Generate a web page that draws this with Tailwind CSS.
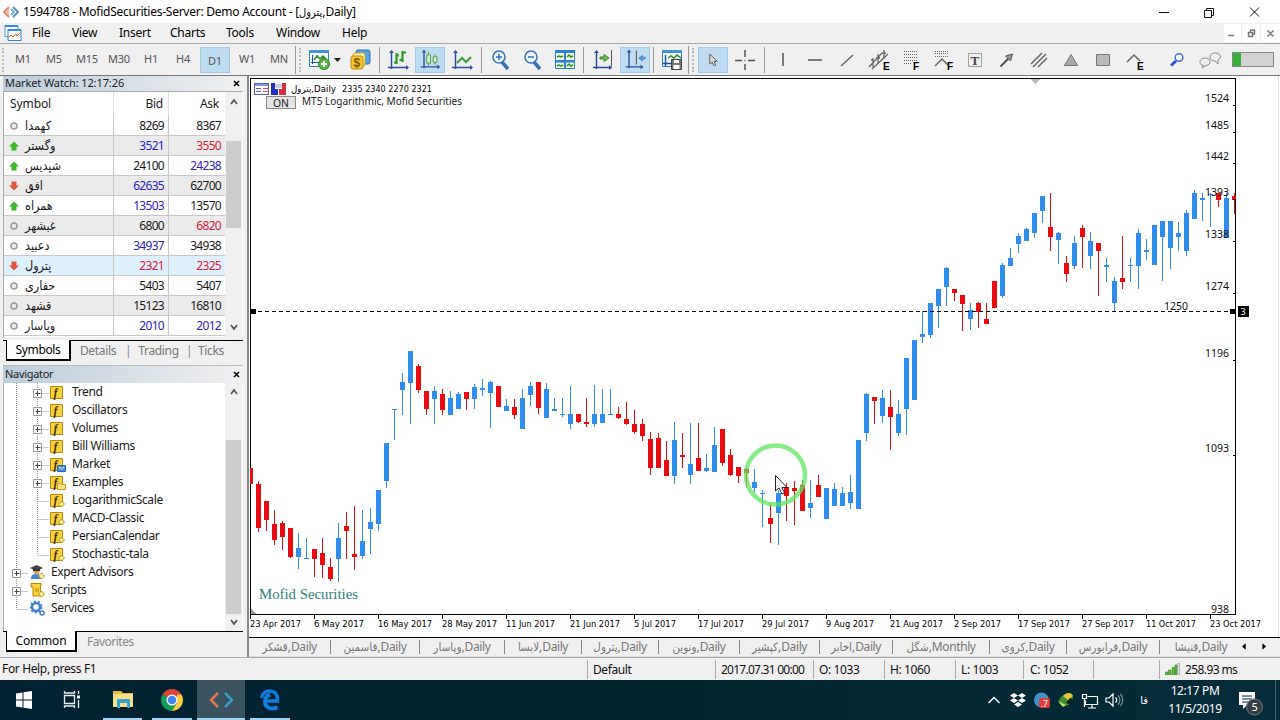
<!DOCTYPE html>
<html lang="en">
<head>
  <meta charset="UTF-8">
  <meta name="viewport" content="width=device-width, initial-scale=1.0">
  <title>MofidSecurities-Server: Demo Account</title>
  <script src="https://cdn.jsdelivr.net/npm/@tailwindcss/browser@4"></script>
</head>
<body class="w-[1280px] h-[720px] overflow-hidden bg-[#f0f0f0] font-['Noto_Sans','DejaVu_Sans_Condensed',sans-serif] text-xs text-[#1a1a1a] tracking-[-0.25px] whitespace-nowrap flex flex-col">

  <!-- Title bar -->
  <header class="h-[23px] shrink-0 bg-white flex items-center pl-[3px]">
    <svg class="w-4 h-4" viewBox="0 0 16 16" fill="none" stroke-width="1.8"><path d="M6 3 1 8l5 5" stroke="#e08060"/><path d="m10 3 5 5-5 5" stroke="#4f8fb0"/><path d="M6 6 4 8l2 2" stroke="#f0b090"/><path d="m8 5 3 3-3 3" stroke="#6ab0d0"/></svg>
    <div class="ml-1 w-[340px] text-black">1594788 - MofidSecurities-Server: Demo Account - [<span class="text-[11px] tracking-normal">پترول</span>,Daily]</div>
    <div class="ml-auto flex items-center">
      <svg class="w-[126px] h-5" viewBox="1154 0 126 20" fill="none" stroke="#111"><path d="M1159 10.500h10M1204.500 8.500h7v7h-7zM1206.500 8.500v-2h7v7h-2M1250 5.500l9 9M1259 5.500l-9 9"/></svg>
    </div>
  </header>

  <!-- Menu -->
  <nav class="h-5 shrink-0 flex items-center pl-1 text-black">
    <svg class="w-[18px] h-[18px]" viewBox="0 0 18 18" fill="#fff"><path d="M1 1.500h13v11H1z" stroke="#4a9be0"/><path d="M1 1h13v2H1z" fill="#2f8de0"/><path d="M4 5.500h13v11H4z" stroke="#2f80d0"/><path d="M4 5h13v2H4z" fill="#2f8de0"/><path d="m5 13 2-2 2 2 3-3 1 2 3-3" fill="none" stroke="#e05a30"/></svg>
    <div class="w-[40px] ml-[10px]">File</div>
    <div class="w-[47px]">View</div>
    <div class="w-[51px]">Insert</div>
    <div class="w-[56px]">Charts</div>
    <div class="w-[50px]">Tools</div>
    <div class="w-[66px]">Window</div>
    <div>Help</div>
    <svg class="ml-auto w-14 h-[18px] bg-white" viewBox="1224 24 56 18" fill="none" stroke="#777" stroke-width="1.500"><path d="M1228 35.500h6M1248.500 32.500h4v4h-4zM1250.500 32v-2h4v4h-2M1267.500 30.500l6 6M1273.500 30.500l-6 6"/><path d="M1241.500 24v18M1260.500 24v18" stroke="#eee" stroke-width="1"/></svg>
  </nav>

  <!-- Toolbar -->
  <section class="h-[33px] shrink-0 flex items-center pl-[7px] border-t border-b border-t-[#a5a5a5] border-b-[#777] text-[11px] text-[#555] relative">
    <div class="absolute left-[2px] top-1 h-6 border-l-2 border-dotted border-[#bbb]"></div>
    <div class="w-8 text-center">M1</div><div class="w-8 text-center pr-[2px]">M5</div><div class="w-8 text-center">M15</div><div class="w-8 text-center">M30</div><div class="w-8 text-center">H1</div><div class="w-8 text-center">H4</div>
    <div class="w-8 px-px"><div class="h-[26px] leading-6 pt-px text-center bg-[#bfdcf2] border border-[#a0cbea]">D1</div></div>
    <div class="w-8 text-center">W1</div><div class="w-8 text-center">MN</div>
    <div class="w-2 h-7 flex items-center justify-between border-l border-[#999]"><div class="ml-[3px] h-6 border-l-2 border-dotted border-[#bbb]"></div></div>

    <svg class="w-10 h-6" viewBox="0 0 40 24" fill="none"><path d="M6.500 2.500h19v16h-19z" fill="#f4faff" stroke="#2d7fc4"/><path d="M6 2h20v3H6z" fill="#3f94d8"/><path d="M9.500 7v9M8 14.500h15" stroke="#1f4f9c"/><path d="m11 12 3-4 3 3 3-3 3 3" stroke="#2d9020" stroke-width="1.500"/><circle cx="21" cy="16" r="5.500" fill="#58b947" stroke="#2a8a20"/><path d="M18 16h6M21 13v6" stroke="#fff" stroke-width="2"/><path d="m31 10 3.500 4 3.500-4z" fill="#222"/></svg>
    <svg class="w-8 h-6 ml-px mr-[3px]" viewBox="0 0 32 24"><rect x="12" y="2" width="14" height="14" rx="2" fill="#58a3e4" stroke="#2d70b8"/><rect x="9" y="5" width="12" height="13" rx="2" fill="#fff2a8" stroke="#d8a520"/><rect x="7" y="8" width="12" height="13" rx="2" fill="#f7c52b" stroke="#c48c10"/><text x="9.500" y="19" font-size="12" font-weight="700" fill="#7a5400" font-family="Liberation Sans">$</text></svg>
    <div class="h-[26px] border-l border-[#999] mr-[2px]"></div>
    <svg class="w-8 h-6" viewBox="0 0 32 24" fill="none"><path d="M9.500 3v18M6 19.500h19" stroke="#2b4fa0" stroke-width="1.500"/><path d="m7 5 2.500-3L12 5zM24 17l3 2.500-3 2.500z" fill="#2b4fa0"/><path d="M14.500 5v11M12 14.500h3M14 7.500h3M20.500 3v11M17.500 12h3M20 4.500h4" stroke="#2c9a24" stroke-width="2.200"/></svg>
    <div class="w-8 px-px"><svg class="w-[30px] h-[26px] bg-[#bfdcf2] border border-[#a0cbea]" viewBox="1 0 30 26" fill="none"><path d="M9.500 3v19M6 20.500h19" stroke="#2b4fa0" stroke-width="1.500"/><path d="m7 5 2.500-3L12 5zM24 18l3 2.500-3 2.500z" fill="#2b4fa0"/><path d="M12.500 7.500h4v9h-4zM14.500 4v3M14.500 17v2M19.500 9.500h4v6h-4zM21.500 7v2M21.500 16v2" stroke="#3f9a3a" fill="#dff5d0"/></svg></div>
    <svg class="w-8 h-6 mr-[3px]" viewBox="0 0 32 24" fill="none"><path d="M9.500 3v18M6 19.500h19" stroke="#2b4fa0" stroke-width="1.500"/><path d="m7 5 2.500-3L12 5zM24 17l3 2.500-3 2.500z" fill="#2b4fa0"/><path d="m11 15 5-5 4 4 5-5" stroke="#3f9a3a" stroke-width="2"/></svg>
    <div class="h-[26px] border-l border-[#999] mr-[3px]"></div>
    <svg class="w-8 h-6" viewBox="0 0 32 24" fill="none"><path d="m17 14 6 7" stroke="#3b6fb8" stroke-width="3.500"/><circle cx="14" cy="9" r="6" fill="#eef7ff" stroke="#3673bb" stroke-width="1.500"/><path d="M11 9h6M14 6v6" stroke="#3673bb" stroke-width="1.500"/></svg>
    <svg class="w-8 h-6" viewBox="0 0 32 24" fill="none"><path d="m17 14 6 7" stroke="#3b6fb8" stroke-width="3.500"/><circle cx="14" cy="9" r="6" fill="#eef7ff" stroke="#3673bb" stroke-width="1.500"/><path d="M11 9h6" stroke="#3673bb" stroke-width="1.500"/></svg>
    <svg class="w-8 h-6 mr-[2px]" viewBox="0 0 32 24" fill="none"><path d="M6.500 2.500h19v18h-19z" fill="#e9f7e4" stroke="#2d7fc4"/><path d="M6 2h20v3H6zM6 12h20v2.500H6zM15 2h2v19h-2z" fill="#2f80d0"/><path d="m8 9 2-1 2 1 2-1M18 9l2-2 2 2 2-1M8 18l2-1 2 1 2-1M18 18l2-2 2 2 2-1" stroke="#2d9020" stroke-width="1.500"/></svg>
    <div class="h-[26px] border-l border-[#999] mr-[3px]"></div>
    <svg class="w-8 h-6" viewBox="0 0 32 24" fill="none"><path d="M9.500 3v18M6 19.500h19" stroke="#2b4fa0" stroke-width="1.500"/><path d="m7 5 2.500-3L12 5zM22 17l3 2.500-3 2.500z" fill="#2b4fa0"/><path d="M24.500 2v16" stroke="#555"/><path d="M13 9h4V6.500l5 3.500-5 3.500V11h-4z" fill="#6fc04f" stroke="#3a8a2a"/></svg>
    <div class="w-8 px-px"><svg class="w-[30px] h-[26px] bg-[#bfdcf2] border border-[#a0cbea]" viewBox="1 0 30 26" fill="none"><path d="M9.500 3v19M6 20.500h19" stroke="#2b4fa0" stroke-width="1.500"/><path d="m7 5 2.500-3L12 5zM22 18l3 2.500-3 2.500z" fill="#2b4fa0"/><path d="M17.500 3v15" stroke="#444"/><path d="m20 11 4-3v2h3v2h-3v2z" fill="#5b9be0" stroke="#3673bb" stroke-width=".7"/></svg></div>
    <div class="h-[26px] border-l border-[#999] ml-[2px] mr-[2px]"></div>
    <svg class="w-8 h-6" viewBox="0 0 32 24" fill="none"><path d="M6.500 2.500h19v16h-19z" fill="#f4faff" stroke="#2d7fc4"/><path d="M6 2h20v3H6z" fill="#3f94d8"/><path d="M9.500 7v11M7 15.500h8" stroke="#1f4f9c" stroke-width="1.500"/><path d="m12 10 3-2 3 2 3-3 4 3" stroke="#2d9020" stroke-width="1.500"/><path d="M15.500 11.500h10v10h-10z" fill="#777" stroke="#444"/><path d="M18 12h5v3h-5zM17.500 17h6v4h-6z" fill="#fff"/></svg>
    <div class="w-[9px] h-7 flex items-center border-l border-[#999]"><div class="ml-[3px] h-6 border-l-2 border-dotted border-[#bbb]"></div></div>

    <div class="w-8 px-px"><svg class="w-[30px] h-[26px] bg-[#bfdcf2] border border-[#a0cbea]" viewBox="1 0 30 26" fill="none"><path d="M12.500 6.500v11l2.500-2.200 2 4 2-1-2-3.800h3.500z" fill="#ddd" stroke="#555"/></svg></div>
    <svg class="w-8 h-6 mr-[3px]" viewBox="0 0 32 24" stroke="#555" stroke-width="1.500"><path d="M6 12.500h7M19 12.500h7M16 2v7M16 16v6M15.500 12.500h1"/></svg>
    <div class="h-[26px] border-l border-[#999] mr-[2px]"></div>
    <svg class="w-8 h-6" viewBox="0 0 32 24" stroke="#555" stroke-width="1.500"><path d="M16 5v13"/></svg>
    <svg class="w-8 h-6" viewBox="0 0 32 24" stroke="#555" stroke-width="1.500"><path d="M9 12h14"/></svg>
    <svg class="w-8 h-6" viewBox="0 0 32 24" stroke="#666" stroke-width="1.500"><path d="M10 18 22 7"/></svg>
    <svg class="w-8 h-6" viewBox="0 0 32 24" fill="none" stroke="#666" stroke-width="1.300"><path d="M6 19 19 5M9 21 25 6M10 10v9M8 12h2M15 6v10M13 10h4M21 2v9M19 5h4"/><text x="20" y="22" font-size="10" font-weight="700" fill="#000" stroke="none" font-family="Liberation Sans">E</text></svg>
    <svg class="w-8 h-6" viewBox="0 0 32 24" fill="none" stroke="#666" stroke-dasharray="1 1"><path d="M9 3.500h14M9 6.500h14M9 9.500h14M9 12.500h14M9 15.500h8"/><text x="18" y="22" font-size="10" font-weight="700" fill="#000" stroke="none" font-family="Liberation Sans">F</text></svg>
    <svg class="w-8 h-6" viewBox="0 0 32 24" fill="none" stroke="#666"><path d="M8 3.500h14M8 5.500h14M8 8.500h14" stroke-dasharray="1 1"/><path d="m8 18 7-7 6 6" stroke-width="1.500"/><text x="20" y="22" font-size="10" font-weight="700" fill="#000" stroke="none" font-family="Liberation Sans">F</text></svg>
    <svg class="w-8 h-6" viewBox="0 0 32 24" fill="none"><path d="M9.500 5.500h13v13h-13z" stroke="#555" stroke-dasharray="1 1"/><text x="11.500" y="17" font-size="13" font-weight="700" fill="#444" font-family="Liberation Serif">T</text></svg>
    <svg class="w-8 h-6" viewBox="0 0 32 24" fill="#999" stroke="#555"><path d="m9.500 18.500 8-8" stroke-width="2"/><path d="m14.500 8 7-2-2 7z"/></svg>
    <svg class="w-8 h-6" viewBox="0 0 32 24" stroke="#666" stroke-width="1.500"><path d="M8 16 19 5M10 19 23 6M15 19l9-9"/></svg>
    <svg class="w-8 h-6" viewBox="0 0 32 24" fill="#aaa" stroke="#777"><path d="M16 6.500 22.500 17.500h-13z"/></svg>
    <svg class="w-8 h-6" viewBox="0 0 32 24" fill="#bbb" stroke="#777"><path d="M9.500 6.500h13v11h-13z"/></svg>
    <svg class="w-8 h-6" viewBox="0 0 32 24" fill="none" stroke="#666" stroke-width="1.500"><path d="m8 14 7-7 6 6"/><text x="18" y="22" font-size="10" font-weight="700" fill="#000" stroke="none" font-family="Liberation Sans">E</text></svg>
    <svg class="w-8 h-6 ml-[10px]" viewBox="0 0 32 24" fill="none"><path d="m15 13-5 4.500" stroke="#2b4fd0" stroke-width="3"/><circle cx="18" cy="9.500" r="3.800" fill="#fff" stroke="#4a6fd8" stroke-width="1.500"/></svg>
    <svg class="w-8 h-6 ml-px" viewBox="0 0 32 24" fill="#eee" stroke="#888"><path d="M21 5c-4 0-5 2-5 4s2 4 5 4l3 3v-4c4-2 3-7-3-7zM11.500 10c-7 0-7 7-2 7.500L8 20l4-2.500c6-.5 5-7.500-.5-7.500z"/></svg>
    <div class="ml-[6px] w-[42px] h-[15px] border border-[#888] bg-[#d2d2d2]"><div class="w-2 h-full bg-[#38b038]"></div></div>
  </section>

  <main class="h-[581px] shrink-0 flex">
    <!-- Left docked panels -->
    <aside class="w-[247px] pl-[3px] pr-1 flex flex-col">
      <section class="h-[289px] shrink-0 flex flex-col">
        <div class="h-[15px] flex items-center justify-between pl-[2px] pr-[3px] bg-linear-to-r from-[#bccddd] to-[#f0f0f0] text-[11px] tracking-[-0.1px]">Market Watch: 12:17:26 <svg class="w-[7px] h-[7px]" viewBox="0 0 7 7" stroke="#000" stroke-width="1.600"><path d="m1 1 5 5M6 1 1 6"/></svg></div>
        <div class="flex h-[246px] border-l border-t border-[#aaa] bg-white">
          <div class="w-[221px]" id="quotes">
            <div class="h-6 flex items-center text-[#222]">
              <div class="w-[110px] h-6 leading-6 pl-[6px] border-r border-[#e0e0e0] tracking-[-0.1px]">Symbol</div>
              <div class="w-[55px] h-6 leading-6 text-right pr-[5px] border-r border-[#e0e0e0]">Bid</div>
              <div class="w-14 text-right pr-[6px]">Ask</div>
            </div>
          </div>
          <div class="w-[17px] bg-[#f0f0f0] flex flex-col items-center justify-between py-[6px] relative">
            <svg class="w-2 h-2" viewBox="0 0 8 8" fill="none" stroke="#555" stroke-width="1.700"><path d="m1 6 3-4 3 4"/></svg>
            <div class="absolute top-[49px] left-px w-[15px] h-[87px] bg-[#cdcdcd]"></div>
            <svg class="w-2 h-2" viewBox="0 0 8 8" fill="none" stroke="#555" stroke-width="1.700"><path d="m1 2 3 4 3-4"/></svg>
          </div>
        </div>
        <div class="mt-[3px] h-[21px] flex border-t border-black text-[#777] leading-[19px] tracking-[-0.35px]">
          <div class="ml-[3px] -mt-px w-[65px] h-[21px] border border-t-0 border-b-2 border-r-2 border-black bg-white text-black text-center">Symbols</div>
          <div class="w-[54px] text-center">Details</div><span class="w-[6px] text-[#888]">|</span>
          <div class="w-[55px] text-center">Trading</div><span class="w-[6px] text-[#888]">|</span>
          <div class="ml-[6px]">Ticks</div>
        </div>
      </section>
      <section class="h-[287px] flex flex-col border-t border-[#bbb]">
        <div class="h-[17px] flex items-center justify-between pl-[2px] pr-[3px] bg-linear-to-r from-[#bccddd] to-[#f0f0f0] text-[11px] tracking-[-0.3px]">Navigator <svg class="w-[7px] h-[7px]" viewBox="0 0 7 7" stroke="#000" stroke-width="1.600"><path d="m1 1 5 5M6 1 1 6"/></svg></div>
        <div class="flex h-[248px] border-l border-[#aaa] bg-white">
          <div class="w-[221px]" id="tree"></div>
          <div class="w-[17px] bg-[#f0f0f0] flex flex-col items-center justify-between py-[5px] relative">
            <svg class="w-2 h-2" viewBox="0 0 8 8" fill="none" stroke="#555" stroke-width="1.700"><path d="m1 6 3-4 3 4"/></svg>
            <div class="absolute top-[57px] left-px w-[15px] h-[174px] bg-[#cdcdcd]"></div>
            <svg class="w-2 h-2" viewBox="0 0 8 8" fill="none" stroke="#555" stroke-width="1.700"><path d="m1 2 3 4 3-4"/></svg>
          </div>
        </div>
        <div class="h-[21px] flex border-t border-black text-[#888] leading-[19px] tracking-[-0.2px]">
          <div class="ml-[3px] -mt-px w-[71px] h-[21px] border border-t-0 border-b-2 border-r-2 border-black bg-white text-black text-center">Common</div>
          <div class="ml-[10px] tracking-[-0.5px]">Favorites</div>
        </div>
      </section>
    </aside>

    <!-- Chart window -->
    <section class="w-[1033px] flex flex-col border-l-2 border-[#888]">
      <svg id="chart" class="w-[1031px] h-[561px] bg-white" viewBox="249 76 1031 561" shape-rendering="crispEdges" font-size="11" letter-spacing="0">
        <path d="M250.500 614V78.500h985V614" fill="none" stroke="#000"/>
        <path d="M250 614.500h986" stroke="#000"/>
        <path d="M1030 79h10l-5 5z" fill="#bbb"/><path d="M251 609v5h5z" fill="#999"/>
        <path d="M1278.500 76v561" stroke="#e0e0e0"/>
        <g id="candles"></g>
        <path d="M251 311.500h985" stroke="#000" stroke-dasharray="4 3"/>
        <path d="M251 309h5v5h-5zM1230 309h5v5h-5zM1238 306h11v11h-11z"/>
        <text x="1240.500" y="315" font-size="9" fill="#fff">3</text>
        <g id="prices" fill="#111"></g>
        <g id="dates" fill="#000" font-family="DejaVu Sans Condensed, sans-serif" font-size="9.500"></g>
        <!-- one-click panel icons -->
        <path d="M254.500 83.500h14v11h-14z" fill="#fff" stroke="#5560c8"/><path d="M255 84h13v2h-13z" fill="#8a90e0"/><path d="M256 88.500h5M256 91.500h5" stroke="#5560c8"/><path d="M263 88.500h5M263 91.500h5" stroke="#d05050"/>
        <path d="M271 83h4v6h3v6h-7z" fill="#2230c0"/><path d="M286 83h-4v6h-3v6h7z" fill="#d03040"/><path d="M275 84h7v4h-7z" fill="#c8d0e8"/>
        <g font-size="9.500" font-family="DejaVu Sans Condensed"><text x="291" y="92" textLength="45" lengthAdjust="spacingAndGlyphs" direction="ltr">پترول,Daily</text><text x="342" y="92" textLength="90" lengthAdjust="spacingAndGlyphs">2335 2340 2270 2321</text></g>
        <path d="M266.500 96.500h29v12h-29z" fill="#e4e4e4" stroke="#888"/><text x="273" y="107" font-size="11" textLength="16" lengthAdjust="spacingAndGlyphs" fill="#222">ON</text>
        <text x="302" y="105" textLength="160" lengthAdjust="spacingAndGlyphs" fill="#222">MT5 Logarithmic, Mofid Securities</text>
        <text x="259" y="599" font-family="Liberation Serif" font-size="15" fill="#2d827a" textLength="99" lengthAdjust="spacingAndGlyphs">Mofid Securities</text>
        <!-- pointer highlight -->
        <circle cx="775.500" cy="475" r="29.500" fill="none" stroke="#5fe65f" stroke-opacity=".75" stroke-width="4.500" shape-rendering="auto"/>
        <path d="M775.500 475.500v15.500l3.500-3 3 6 2.500-1-2.500-5.500h5z" fill="#fff" stroke="#222" shape-rendering="auto"/>
      </svg>
      <div class="h-5 flex items-center border-t border-black border-b border-b-[#ddd] text-[#777]" dir="ltr">
        <div class="flex items-center tracking-[-0.4px]" id="tabs"></div>
        <svg class="ml-auto mr-3 w-7 h-3" viewBox="0 0 28 12"><path d="M4 2v7L0 5.500zM22 2v7l4-3.500z"/></svg>
      </div>
    </section>
  </main>

  <!-- Status bar -->
  <footer class="h-[23px] shrink-0 flex items-center border-t border-[#a8a8a8] text-[#111] leading-[22px] tracking-[-0.4px]">
    <div class="w-[587px] pl-[2px] tracking-[-0.35px]">For Help, press F1</div>
    <div class="w-32 h-[19px] leading-5 border-l border-[#aaa] pl-[5px]">Default</div>
    <div class="w-[98px] h-[19px] leading-5 border-l border-[#aaa] pl-[5px] tracking-[-0.75px]">2017.07.31 00:00</div>
    <div class="w-[71px] h-[19px] leading-5 border-l border-[#aaa] pl-[5px]">O: 1033</div>
    <div class="w-[71px] h-[19px] leading-5 border-l border-[#aaa] pl-[5px]">H: 1060</div>
    <div class="w-[68px] h-[19px] leading-5 border-l border-[#aaa] pl-[5px]">L: 1003</div>
    <div class="w-[70px] h-[19px] leading-5 border-l border-[#aaa] pl-[6px]">C: 1052</div>
    <div class="w-[66px] h-[19px] border-l border-[#aaa]"></div>
    <div class="h-[19px] border-l border-[#aaa] pl-[5px] flex items-center gap-[5px] tracking-[-0.6px]">
      <svg class="w-[15px] h-3" viewBox="0 0 15 12" fill="#5dbb3f" stroke="#38882a" stroke-width=".6"><path d="M0 9h3v3H0zM3.500 7h2.500v5H3.500zM7 4.500h2.500V12H7zM10 2h2v10h-2z"/><path d="M12.500.5h2V12h-2z" fill="#ddd" stroke="#999"/></svg><span class="pt-px">258.93 ms</span>
    </div>
  </footer>

  <!-- Windows taskbar -->
  <div class="h-10 shrink-0 flex items-center bg-linear-to-r from-[#022132] via-[#032530] to-[#042c3a] text-white">
    <svg class="w-12 h-10" viewBox="0 0 48 40" fill="#fff"><path d="M16 13.500 22.500 12.500v7H16zM23.500 12.300 32 11v8.500h-8.500zM16 20.500h6.500v7L16 26.500zM23.500 20.500H32V29l-8.500-1.300z"/></svg>
    <svg class="w-[50px] h-10" viewBox="0 0 50 40" fill="none" stroke="#e8eef2" stroke-width="1.300"><path d="M16.500 15.500h10v8h-10zM16.500 11v2h10v-2M16.500 28v-2h10v2M30.500 11v3M30.500 20v8"/><path d="M29 15.500h3v3h-3z" fill="#fff" stroke="none"/></svg>
    <div class="w-[49px] h-10 px-[5px] flex flex-col items-center justify-between">
      <svg class="w-6 h-[38px]" viewBox="0 0 24 38"><path d="M2 11h8l2 2h10v14H2z" fill="#e8b93c"/><path d="M2 14h20v13H2z" fill="#fbe08a"/><path d="M6 19h13v9h-3v-5H9v5H6z" fill="#35a6cf"/></svg>
      <div class="w-full h-[2px] bg-[#9fd4f5]"></div>
    </div>
    <div class="w-[50px] h-10 px-[5px] flex flex-col items-center justify-between">
      <svg class="w-6 h-[38px]" viewBox="0 0 24 38"><path d="M12 20 2.500 14.500a11 11 0 0 1 19 0z" fill="#db4437"/><path d="M2.500 14.500A11 11 0 0 0 12 31l5-8.500-5-2.500z" fill="#0f9d58"/><path d="M21.500 14.500A11 11 0 0 1 12 31l5-8.500v-8z" fill="#ffcd40"/><circle cx="12" cy="20" r="5.500" fill="#fff"/><circle cx="12" cy="20" r="4.300" fill="#4285f4"/></svg>
      <div class="w-full h-[2px] bg-[#9fd4f5]"></div>
    </div>
    <div class="w-12 h-10 bg-[#3a5361] flex flex-col items-center justify-between">
      <svg class="w-6 h-[38px]" viewBox="0 0 24 38" fill="none" stroke-width="2.500"><path d="m9 13-7 7 7 7" stroke="#e0784c"/><path d="m16 13 7 7-7 7" stroke="#3a9dc0"/></svg>
      <div class="w-full h-[2px] bg-[#9fd4f5]"></div>
    </div>
    <div class="w-[50px] h-10 px-[5px] flex flex-col items-center justify-between">
      <svg class="w-6 h-[38px]" viewBox="0 0 24 38" fill="none"><path d="M3.500 18C5 8.500 19.500 8.500 19.500 19v2H8" stroke="#0f7de0" stroke-width="3.500"/><path d="M12 14.500c-7 2-7 14 2 14 2.500 0 4-.5 5.500-1.300" stroke="#0f7de0" stroke-width="4"/></svg>
      <div class="w-full h-[2px] bg-[#9fd4f5]"></div>
    </div>
    <div class="ml-auto flex items-center">
      <svg class="w-6 h-6" viewBox="0 0 24 24" fill="none" stroke="#fff" stroke-width="1.300"><path d="m6.500 15 5.500-5.500 5.500 5.500"/></svg>
      <svg class="w-6 h-6" viewBox="0 0 24 24" fill="#fff"><path d="m8 5 4 2.500L8 10 4 7.500zM16 5l4 2.500-4 2.500-4-2.500zM8 10l4 2.500L8 15l-4-2.500zM16 10l4 2.500-4 2.500-4-2.500zM12 14l4 2.500-4 2.500-4-2.500z"/></svg>
      <svg class="w-6 h-6" viewBox="0 0 24 24"><circle cx="11.500" cy="12" r="7.500" fill="#3f93c8"/><rect x="9" y="10" width="11" height="10" rx="2" fill="#e03c3c"/><text x="11" y="18.500" font-size="8.500" fill="#fff">.7</text></svg>
      <svg class="w-6 h-6" viewBox="0 0 24 24"><ellipse cx="12" cy="12" rx="7.500" ry="5.500" fill="#3d8e34" transform="rotate(-30 12 12)"/><path d="M9 8c3-4 9-4 10 0l-5 4z" fill="#e8c838"/><path d="m12 15 4-5 4 2-2 5z" fill="#0a1c24"/><path d="m4 13 8 4-3 2z" fill="#c8e060"/></svg>
      <svg class="w-6 h-6" viewBox="0 0 24 24" fill="none" stroke="#fff" stroke-width="1.200"><path d="M9.500 8.500h10v8h-12v-4M14 17v3M10 20h8M4.500 6.500h4v4h-4zM6.500 11v8"/></svg>
      <svg class="w-6 h-6" viewBox="0 0 24 24" fill="none" stroke="#fff" stroke-width="1.200"><path d="M4 10h3l4-4v12l-4-4H4zM13.500 9.500c1.500 1.500 1.500 3.500 0 5"/><path d="M16 7.500c2.500 2.500 2.500 6.500 0 9M18.500 6c3 3.500 3 8.500 0 12" stroke="#7a939d"/></svg>
      <div class="w-[34px] text-center text-[11px] ml-px">فا</div>
      <div class="w-[68px] text-center leading-[18px] tracking-[-0.4px]">12:17 PM<br>11/5/2019</div>
      <svg class="w-[46px] h-10" viewBox="0 0 46 40"><path d="M10 12h16v13H18l-4 4v-4h-4z" fill="#fff"/><path d="M13 16h10M13 19h10M13 22h6" stroke="#04283a"/><circle cx="25.500" cy="27" r="8" fill="#333e44" stroke="#6c7a80"/><text x="22.500" y="31" font-size="11" fill="#fff">5</text></svg>
      <div class="w-[5px] h-10 border-l border-[#45616c]"></div>
    </div>
  </div>

  <script>
    const BLACK = 'text-[#1a1a1a]', BLUE = 'text-[#2a22c8]', RED = 'text-[#d8203a]';
    const marks = {
      o: '<circle cx="6" cy="6" r="3" fill="#eee" stroke="#999" stroke-width="1.500"/>',
      u: '<path d="M6 1.500 11 6.500H8.500v4h-5v-4H1z" fill="#3cb82c"/>',
      d: '<path d="M6 10.500 1 5.500h2.500v-4h5v4H11z" fill="#e0583c"/>'
    };
    const quotes = [
      ['o', 'کهمدا', 8269, BLACK, 8367, BLACK], ['u', 'وگستر', 3521, BLUE, 3550, RED],
      ['u', 'شپدیس', 24100, BLACK, 24238, BLUE], ['d', 'افق', 62635, BLUE, 62700, BLACK],
      ['u', 'همراه', 13503, BLUE, 13570, BLACK], ['o', 'غبشهر', 6800, BLACK, 6820, RED],
      ['o', 'دعبید', 34937, BLUE, 34938, BLACK], ['d', 'پترول', 2321, RED, 2325, RED],
      ['o', 'حفاری', 5403, BLACK, 5407, BLACK], ['o', 'قشهد', 15123, BLACK, 16810, BLACK],
      ['o', 'وپاسار', 2010, BLUE, 2012, BLUE]
    ];
    document.getElementById('quotes').innerHTML += quotes.map((q, i) => {
      const bg = i === 7 ? 'bg-[#dff0fd]' : i % 2 ? 'bg-[#ebebeb]' : 'bg-white';
      return `<div class="h-5 flex border-b border-[#c8c8c8] leading-[19px] tracking-[-0.7px] ${bg}">
        <div class="w-[110px] flex items-center pl-1 border-r border-[#c8c8c8]"><svg class="w-3 h-3 mr-[5px]" viewBox="0 0 12 12">${marks[q[0]]}</svg><span class="text-[12.5px] tracking-normal">${q[1]}</span></div>
        <div class="w-[55px] text-right pr-[4px] border-r border-[#c8c8c8] ${q[3]}">${q[2]}</div>
        <div class="w-14 text-right pr-[4px] ${q[5]}">${q[4]}</div></div>`;
    }).join('');

    // navigator tree: label, level, expandable, icon kind
    const fIcon = '<path d="M.5 2.500h12v12H.5z" fill="#f8d13c" stroke="#b8860b"/><text x="3.500" y="12.500" font-size="12" font-style="italic" font-weight="700" font-family="Liberation Serif" fill="#4a3200">f</text>';
    const diamond = '<path d="m11.500 9 3 3-3 3-3-3z" fill="#fff2a0" stroke="#b8900b"/>';
    const icons = {
      f: fIcon,
      fm: fIcon + '<path d="M7.500 9.500h8v6h-8z" fill="#4a90e0" stroke="#2d68b0"/><path d="m9 11 2.500 2 2.500-2" fill="none" stroke="#fff"/>',
      fe: fIcon + '<path d="M7.500 9.500h3l1 1h4v5h-8z" fill="#fbe68a" stroke="#c49a20"/>',
      fd: fIcon + diamond,
      ea: '<path d="M1 15c0-4 2-5 5-5s5 1 5 5z" fill="#3f88d0"/><circle cx="6.500" cy="7.500" r="3" fill="#d9a066"/><path d="m0 4 6.500-3L13 4 6.500 7z" fill="#444"/><path d="M3 5h7v2H3z" fill="#333"/>' + diamond,
      sc: '<path d="M1 1.500h10v3h-.5V14H3V5H1z" fill="#f8d13c" stroke="#b8860b"/><path d="M5 7h4M5 9h4" stroke="#b8860b"/>' + diamond,
      sv: '<circle cx="6" cy="7" r="4" fill="none" stroke="#3f80cc" stroke-width="2.500"/><circle cx="6" cy="7" r="5.700" fill="none" stroke="#3f80cc" stroke-width="1.500" stroke-dasharray="2 2"/><circle cx="12" cy="13" r="2" fill="none" stroke="#3f80cc" stroke-width="1.500"/>'
    };
    const nodes = [
      ['Trend', 2, 1, 'f'], ['Oscillators', 2, 1, 'f'], ['Volumes', 2, 1, 'f'], ['Bill Williams', 2, 1, 'f'],
      ['Market', 2, 1, 'fm'], ['Examples', 2, 1, 'fe'], ['LogarithmicScale', 2, 0, 'fd'], ['MACD-Classic', 2, 0, 'fd'],
      ['PersianCalendar', 2, 0, 'fd'], ['Stochastic-tala', 2, 0, 'fd'], ['Expert Advisors', 1, 1, 'ea'],
      ['Scripts', 1, 1, 'sc'], ['Services', 1, 0, 'sv']
    ];
    document.getElementById('tree').innerHTML = nodes.map(([label, level, plus, icon], i) => {
      const x = level === 2 ? 33.5 : 12.5;
      const end = i === 9 || i === 12 ? 10 : 18;
      const lines = `M12.500 0v${i === 12 ? 10 : 18}` + (level === 2 ? `M33.500 0v${end}` : '') + `M${x} 10.500h11`;
      const box = plus ? `<path d="M${x - 4} 6.500h8v8h-8z" fill="#fff" stroke="#999"/><path d="M${x - 2} 10.500h5M${x + 0} 8v5" stroke="#444"/>` : '';
      const gutter = level === 2 ? 'w-[46px]' : 'w-[26px]';
      const gap = level === 2 ? 'ml-[6px]' : 'ml-[5px]';
      return `<div class="h-[18px] flex items-center tracking-[-0.35px]">
        <svg class="${gutter} h-[18px] shrink-0" viewBox="0 0 ${level === 2 ? 46 : 26} 18" fill="none"><path d="${lines}" stroke="#999" stroke-dasharray="1 1"/>${box}</svg>
        <svg class="w-4 h-4 shrink-0" viewBox="0 0 16 16">${icons[icon]}</svg><span class="${gap}">${label}</span></div>`;
    }).join('');

    // candles: direction, high, body top, body bottom, low
    const candles = `r468,468,484,484 r481,484,528,532 r501,501,520,531 r510,524,540,545 r521,523,537,550 r528,528,557,558 b533,548,557,569 b538,558,559,559
      r549,549,559,577 r538,553,565,578 r558,567,579,581 b523,538,559,582 r512,526,531,559 r506,554,557,570 b510,541,556,559 b508,522,529,554
      b490,490,524,531 b443,443,481,488 b409,409,410,440 b373,382,390,415 b351,351,383,424 r364,366,390,393 r391,391,409,415 b386,391,399,424
      r389,394,410,415 b391,398,415,415 b392,394,409,409 r392,392,399,410 b384,387,399,409 b379,388,390,396 b381,382,393,428 r386,386,407,407
      b399,406,411,411 r399,407,415,419 b389,398,429,429 b382,386,395,406 r382,382,408,414 b383,389,418,418 b398,409,411,411 b398,414,415,417
      b386,414,424,429 r414,414,422,423 r398,422,424,427 b385,414,424,427 b389,414,423,423 b389,414,415,415 r407,414,418,419 r402,419,424,425
      r410,424,432,434 r419,424,436,441 r432,439,468,475 r433,438,468,468 r441,460,476,476 b422,440,476,484 r433,455,457,468 b423,464,475,484
      r423,458,471,471 b454,468,471,472 b427,445,472,472 r429,429,463,466 r449,455,475,476 r467,467,476,483 r468,469,473,487 b469,482,488,492
      b490,493,494,527 r503,518,524,543 b490,493,513,545 r483,487,496,521 r481,488,491,525 r480,485,511,511 b480,503,508,518 r475,485,497,497
      b488,488,519,519 b483,489,506,506 b487,493,506,506 b475,492,503,509 b440,440,509,509 b393,394,433,441 r397,397,401,424 b390,398,416,423
      r390,407,417,450 b400,414,433,436 b358,358,409,435 b340,340,400,400 b311,334,337,343 b303,303,335,338 b289,289,306,328 b267,268,287,306
      r289,289,293,301 r295,295,304,331 b303,310,319,330 r302,303,312,328 r303,319,324,324 r281,281,308,308 b263,265,296,298 b248,258,266,266
      b233,236,244,253 b228,229,241,241 b213,213,233,238 b196,196,211,223 r193,227,237,251 b232,233,240,264 r256,263,274,282 b236,243,266,269
      r225,228,237,268 b232,241,256,269 r243,243,251,296 b258,265,267,282 b277,281,303,311 r236,278,282,289 b258,265,266,282 b229,233,266,289
      b239,250,252,260 b225,225,265,265 b221,221,237,281 b221,221,248,269 b222,233,237,251 b210,213,251,256 b190,193,219,219 b193,198,200,221
      b193,194,195,227 r193,193,200,207 b193,198,238,238 r193,196,200,214`.trim().split(/\s+/);
    document.getElementById('candles').innerHTML = candles.map((c, i) => {
      const [high, top, bottom, low] = c.slice(1).split(',').map(Number);
      const color = c[0] === 'r' ? '#e80c10' : '#2f8eec';
      const x = 250 + i * 8;
      const left = i === 0 ? 251 : x - 2;
      const right = Math.min(x + 3, 1236);
      return `<path d="M${x} ${high}h1V${low}h-1z" fill="${color}"/><path d="M${left} ${top}H${right}V${bottom}H${left}z" fill="${color}"/>`;
    }).join('');

    const prices = [[1524, 98], [1485, 125], [1442, 156], [1393, 192], [1338, 234], [1274, 286], [1196, 353], [1093, 448], [938, 609]];
    document.getElementById('prices').innerHTML = prices.map(([p, y]) => {
      const w = p > 999 ? 24 : 18;
      const tick = p > 999 ? `<path d="M1233 ${y + 7.5}h3" stroke="#000"/>` : '';
      return `<text x="${1229 - w}" y="${y + 4}" textLength="${w}" lengthAdjust="spacingAndGlyphs">${p}</text>${tick}`;
    }).join('') + '<text x="1164" y="310" textLength="24" lengthAdjust="spacingAndGlyphs">1250</text>';

    const dates = [['23 Apr 2017', 51], ['6 May 2017', 50], ['16 May 2017', 54], ['28 May 2017', 55], ['11 Jun 2017', 49], ['21 Jun 2017', 50], ['5 Jul 2017', 42], ['17 Jul 2017', 46],
      ['29 Jul 2017', 47], ['9 Aug 2017', 48], ['21 Aug 2017', 53], ['2 Sep 2017', 47], ['17 Sep 2017', 52], ['27 Sep 2017', 52], ['11 Oct 2017', 50], ['23 Oct 2017', 51]];
    document.getElementById('dates').innerHTML = dates.map(([d, w], i) => {
      const x = 250 + i * 64;
      return `<path d="M${x + .5} 615v4" stroke="#000"/><text x="${x}" y="627" textLength="${w}" lengthAdjust="spacingAndGlyphs">${d}</text>`;
    }).join('');

    // chart tabs: symbol, period, width
    const tabs = [['قشکر', 'Daily', 82], ['فاسمین', 'Daily', 89], ['وپاسار', 'Daily', 85], ['لابسا', 'Daily', 77], ['پترول', 'Daily', 77], ['ونوین', 'Daily', 81],
      ['کپشیر', 'Daily', 80], ['اخابر', 'Daily', 73], ['شگل', 'Monthly', 97], ['کروی', 'Daily', 77], ['فرابورس', 'Daily', 93], ['قنیشا', 'Daily', 82]];
    document.getElementById('tabs').innerHTML = tabs.map(([s, p, w], i) =>
      `<div class="h-[14px] leading-[14px] text-center ${i < 11 ? 'border-r border-[#888]' : ''}" style="width:${w}px"><span class="text-[11.5px] tracking-normal">${s}</span>,${p}</div>`
    ).join('');
  </script>
</body>
</html>
